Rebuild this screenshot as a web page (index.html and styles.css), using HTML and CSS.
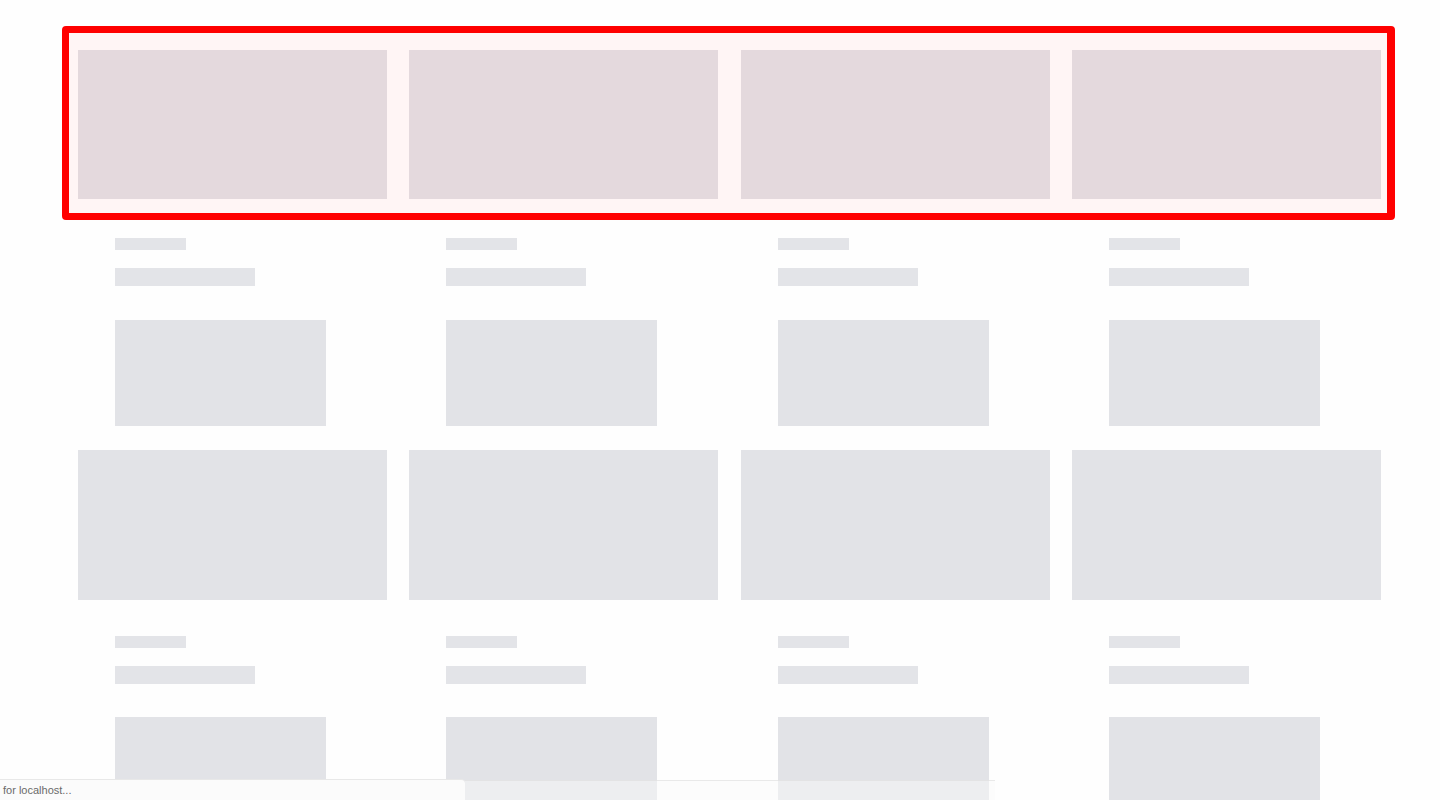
FILE: index.html
```html
<!DOCTYPE html>
<html lang="en">
<head>
<meta charset="utf-8">
<title>Loading</title>
<link rel="stylesheet" href="styles.css">
</head>
<body>
<main class="page">
  <section class="highlight">
    <div class="grid">
      <div class="media media-pink"></div>
      <div class="media media-pink"></div>
      <div class="media media-pink"></div>
      <div class="media media-pink"></div>
    </div>
  </section>
  <div class="grid grid-first">
    <div class="body"><div class="bar bar-s"></div><div class="bar bar-m"></div><div class="thumb"></div></div>
    <div class="body"><div class="bar bar-s"></div><div class="bar bar-m"></div><div class="thumb"></div></div>
    <div class="body"><div class="bar bar-s"></div><div class="bar bar-m"></div><div class="thumb"></div></div>
    <div class="body"><div class="bar bar-s"></div><div class="bar bar-m"></div><div class="thumb"></div></div>
  </div>
  <div class="grid">
    <div class="media"></div>
    <div class="media"></div>
    <div class="media"></div>
    <div class="media"></div>
  </div>
  <div class="grid grid-second">
    <div class="body"><div class="bar bar-s"></div><div class="bar bar-m"></div><div class="thumb"></div></div>
    <div class="body"><div class="bar bar-s"></div><div class="bar bar-m"></div><div class="thumb"></div></div>
    <div class="body"><div class="bar bar-s"></div><div class="bar bar-m"></div><div class="thumb"></div></div>
    <div class="body"><div class="bar bar-s"></div><div class="bar bar-m"></div><div class="thumb"></div></div>
  </div>
</main>
<div class="status">for localhost...</div>
<div class="scrolltrack"></div>
</body>
</html>
```

FILE: styles.css
```css
html, body {
  margin: 0;
  padding: 0;
  background: #fefefe;
  height: 800px;
  overflow: hidden;
  font-family: "Liberation Sans", Arial, sans-serif;
}

.page {
  padding: 50px 0 0 78px;
}

.grid {
  display: grid;
  grid-template-columns: repeat(4, 309px);
  column-gap: 22.33px;
}

.highlight {
  margin: -24px 0 -21px -16px;
  width: 1303px;
  padding: 17px 6px 14px 9px;
  border: 7px solid #ff0000;
  border-right-width: 8px;
  border-radius: 4px;
  background: #fff5f5;
}

.media {
  height: 150px;
  background: #e2e3e7;
}

.media-pink {
  height: 149px;
  background: #e4d9dd;
}

.body {
  padding: 38px 0 24px 37px;
  display: flex;
  flex-direction: column;
  align-items: flex-start;
}

.grid-first .body {
  padding-top: 39px;
}

.grid-second .body {
  padding-top: 36px;
}

.grid-second .thumb {
  margin-top: 33px;
}

.bar {
  background: #e3e4e8;
}

.bar-s {
  width: 71px;
  height: 12px;
}

.bar-m {
  width: 140px;
  height: 18px;
  margin-top: 18px;
}

.thumb {
  width: 211px;
  height: 106px;
  margin-top: 34px;
  background: #e2e3e7;
}

.status {
  position: fixed;
  left: 0;
  bottom: 0;
  width: 462px;
  height: 20px;
  line-height: 20px;
  padding-left: 3px;
  font-size: 11px;
  color: #6a6a6a;
  background: #fbfbfb;
  border-top: 1px solid #e8e8e8;
  border-top-right-radius: 4px;
}

.scrolltrack {
  position: fixed;
  left: 465px;
  bottom: 0;
  width: 530px;
  height: 19px;
  background: rgba(250, 250, 250, 0.45);
  border-top: 1px solid rgba(220, 220, 220, 0.6);
}
```
